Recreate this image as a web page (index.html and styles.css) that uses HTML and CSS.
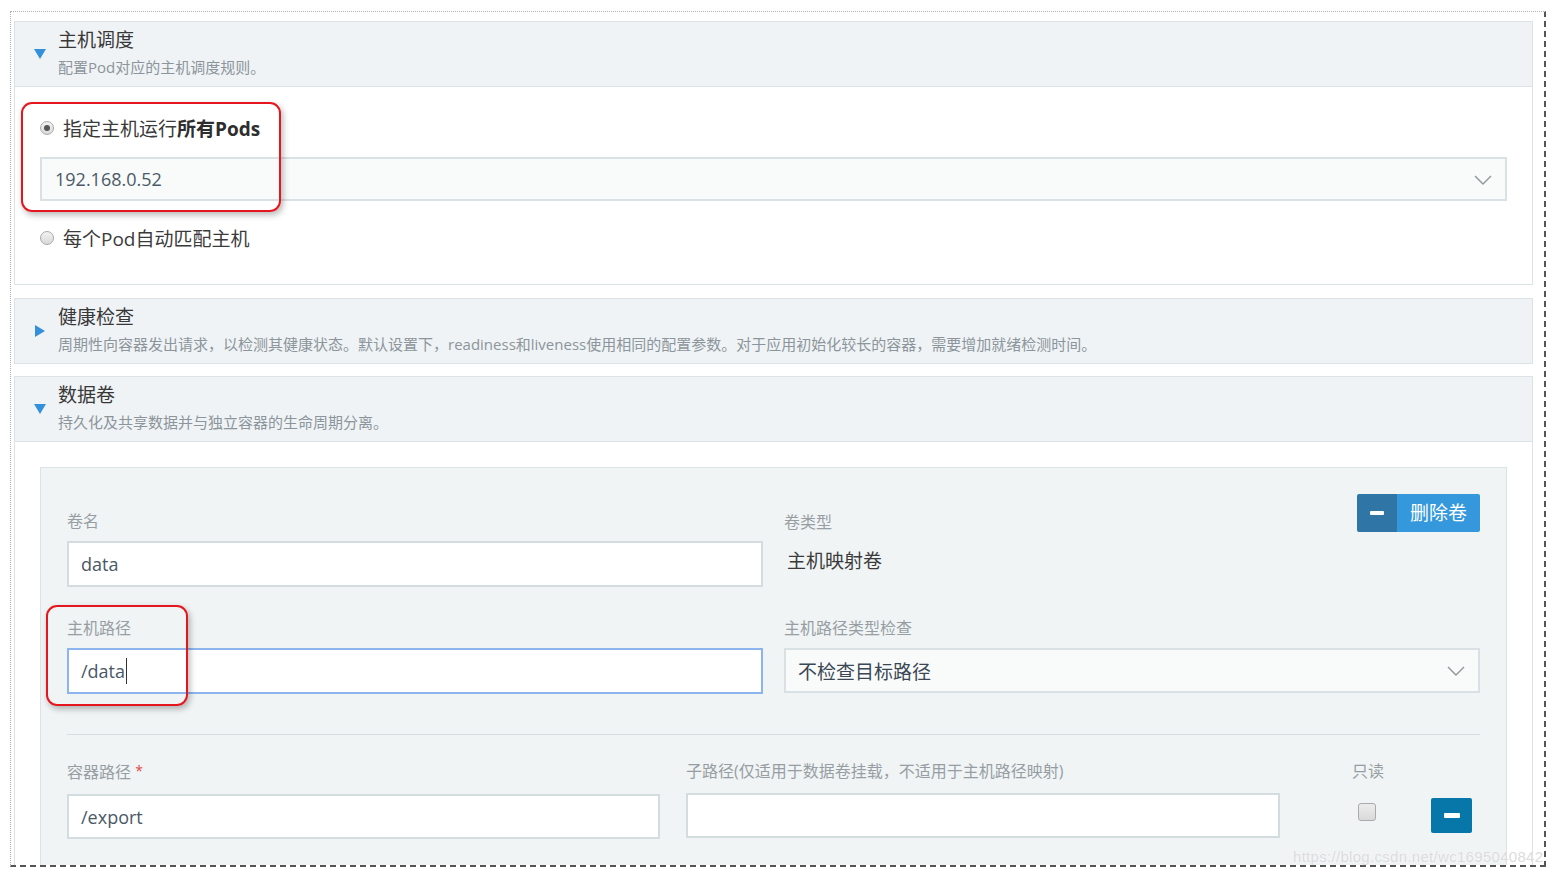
FILE: index.html
```html
<!DOCTYPE html>
<html lang="zh-CN">
<head>
<meta charset="utf-8">
<title>主机调度</title>
<link rel="stylesheet" href="styles.css">
</head>
<body>
<div class="frame">
  <section class="panel">
    <div class="panel-head">
      <span class="tri tri-down"></span>
      <div class="head-text">
        <div class="title">主机调度</div>
        <div class="sub">配置Pod对应的主机调度规则。</div>
      </div>
    </div>
    <div class="panel-body sched">
      <div class="radio-row"><span class="radio checked"></span><span>指定主机运行<b>所有Pods</b></span></div>
      <div class="select host-select">
        <span class="val">192.168.0.52</span>
        <svg class="chev" width="18" height="10" viewBox="0 0 18 10"><path d="M1 1 L9 9 L17 1" fill="none" stroke="#8d969b" stroke-width="1.4"/></svg>
      </div>
      <div class="radio-row second"><span class="radio"></span><span>每个Pod自动匹配主机</span></div>
    </div>
  </section>

  <section class="panel gap1">
    <div class="panel-head">
      <span class="tri tri-right"></span>
      <div class="head-text">
        <div class="title">健康检查</div>
        <div class="sub">周期性向容器发出请求，以检测其健康状态。默认设置下，readiness和liveness使用相同的配置参数。对于应用初始化较长的容器，需要增加就绪检测时间。</div>
      </div>
    </div>
  </section>

  <section class="panel gap2">
    <div class="panel-head">
      <span class="tri tri-down"></span>
      <div class="head-text">
        <div class="title">数据卷</div>
        <div class="sub">持久化及共享数据并与独立容器的生命周期分离。</div>
      </div>
    </div>
    <div class="panel-body vols">
      <div class="card">
        <div class="grid2">
          <div class="cell first">
            <div class="lbl">卷名</div>
            <div class="input">data</div>
          </div>
          <div class="cell">
            <div class="cell-head">
              <div class="lbl">卷类型</div>
              <div class="btn-del"><span class="btn-icon"><span class="bar"></span></span><span class="btn-text">删除卷</span></div>
            </div>
            <div class="static">主机映射卷</div>
          </div>
          <div class="cell">
            <div class="lbl">主机路径</div>
            <div class="input focus">/data<span class="caret"></span></div>
          </div>
          <div class="cell">
            <div class="lbl">主机路径类型检查</div>
            <div class="select">
              <span class="val dark">不检查目标路径</span>
              <svg class="chev" width="18" height="10" viewBox="0 0 18 10"><path d="M1 1 L9 9 L17 1" fill="none" stroke="#8d969b" stroke-width="1.4"/></svg>
            </div>
          </div>
        </div>
        <div class="sep"></div>
        <div class="grid3">
          <div class="cell">
            <div class="lbl">容器路径 <span class="req">*</span></div>
            <div class="input">/export</div>
          </div>
          <div class="cell">
            <div class="lbl">子路径(仅适用于数据卷挂载，不适用于主机路径映射)</div>
            <div class="input"></div>
          </div>
          <div class="cell ro">
            <div class="ro-col">
              <div class="lbl">只读</div>
              <span class="checkbox"></span>
            </div>
            <div class="btn-minus"><span class="bar"></span></div>
          </div>
        </div>
      </div>
    </div>
  </section>
</div>
<div class="watermark">https://blog.csdn.net/wc1695040842</div>
<div class="mark mark1"></div>
<div class="mark mark2"></div>
</body>
</html>
```
FILE: styles.css
```css
html, body {
  margin: 0;
  padding: 0;
  background: #fff;
}
body {
  position: relative;
  font-family: "Open Sans", "Noto Sans CJK SC", sans-serif;
  color: #3b3b3b;
}
.frame {
  position: relative;
  box-sizing: border-box;
  margin: 11px 0 0 10px;
  width: 1536px;
  height: 856px;
  border-left: 1px dotted #b0b0b0;
  border-top: 1px dotted #b0b0b0;
  border-right: 2px dashed #555;
  border-bottom: 2px dashed #555;
  padding: 9px 11px 0 3px;
  overflow: hidden;
}
.panel-head {
  display: flex;
  align-items: center;
  background: #eff3f5;
  border: 1px solid #dce3e6;
  padding: 6px 0 9px 19px;
}
.tri {
  width: 0;
  height: 0;
  flex: none;
}
.tri-down {
  border-left: 6px solid transparent;
  border-right: 6px solid transparent;
  border-top: 10px solid #3590db;
  margin-right: 12px;
  margin-top: 2px;
}
.tri-right {
  border-top: 6px solid transparent;
  border-bottom: 6px solid transparent;
  border-left: 10px solid #3590db;
  margin-left: 1px;
  margin-right: 13px;
  margin-top: 3px;
}
.title {
  font-size: 19px;
  line-height: 24px;
  color: #383838;
}
.sub {
  font-size: 15px;
  line-height: 20px;
  margin-top: 5px;
  color: #8c959b;
  white-space: nowrap;
}
.panel-body {
  border: 1px solid #dce3e6;
  border-top: 0;
  background: #fff;
}
.gap1 { margin-top: 13px; }
.gap2 { margin-top: 12px; }

.sched {
  padding: 28px 25px 33px 25px;
}
.radio-row {
  display: flex;
  align-items: center;
  height: 26px;
  font-size: 19px;
  color: #3b3b3b;
}
.radio-row b { font-weight: 700; color: #2e2e2e; }
.radio-row.second { margin-top: 24px; }
.radio {
  box-sizing: border-box;
  width: 14px;
  height: 14px;
  border-radius: 50%;
  border: 1px solid #a9a9a9;
  background: linear-gradient(#f2f2f2, #d9d9d9);
  margin-right: 9px;
  position: relative;
  flex: none;
}
.radio.checked::after {
  content: "";
  position: absolute;
  left: 3px;
  top: 3px;
  width: 6px;
  height: 6px;
  border-radius: 50%;
  background: #555;
}
.select {
  box-sizing: border-box;
  height: 45px;
  border: 2px solid #dae1e4;
  background: #f9fbfb;
  display: flex;
  align-items: center;
  justify-content: space-between;
  padding: 0 13px 0 12px;
}
.host-select {
  margin-top: 16px;
  height: 44px;
  padding-left: 13px;
}
.val {
  font-size: 18px;
  color: #4c5a67;
}
.val.dark { color: #3b4754; font-size: 19px; }
.chev { flex: none; margin-top: 1px; }

.vols {
  padding: 25px 25px 0 25px;
  height: 600px;
}
.card {
  background: #f0f4f5;
  border: 1px solid #dce3e6;
  padding: 26px 26px 40px 26px;
}
.grid2 {
  display: grid;
  grid-template-columns: 1fr 1fr;
  column-gap: 21px;
  row-gap: 31px;
}
.cell.first { padding-top: 17px; }
.lbl {
  font-size: 16px;
  line-height: 20px;
  color: #979ea3;
  white-space: nowrap;
}
.lbl + .input, .lbl + .select { margin-top: 10px; }
.input {
  box-sizing: border-box;
  height: 46px;
  border: 2px solid #d3dcdf;
  background: #fff;
  padding: 0 12px;
  font-size: 18px;
  line-height: 42px;
  color: #4a5866;
  display: flex;
  align-items: center;
}
.input.focus { border-color: #8cb5ef; }
.caret {
  display: inline-block;
  width: 1px;
  height: 26px;
  background: #333;
  margin-left: 1px;
}
.cell-head {
  display: flex;
  justify-content: space-between;
  align-items: flex-end;
  height: 38px;
}
.btn-del {
  display: flex;
  height: 38px;
  border-radius: 2px;
  overflow: hidden;
}
.btn-icon {
  width: 40px;
  background: #2f75a5;
  display: flex;
  align-items: center;
  justify-content: center;
}
.bar {
  display: block;
  width: 14px;
  height: 4px;
  background: #fff;
  border-radius: 1px;
}
.btn-text {
  background: #3598dc;
  color: #fff;
  font-size: 19px;
  line-height: 38px;
  padding: 0 13px;
}
.static {
  margin-top: 17px;
  font-size: 19px;
  line-height: 24px;
  color: #3b3b3b;
  padding-left: 3px;
}
.sep {
  margin-top: 40px;
  height: 1px;
  background: #d6dde0;
}
.grid3 {
  display: grid;
  grid-template-columns: 593px 594px 1fr;
  column-gap: 26px;
  margin-top: 26px;
}
.grid3 .lbl + .input { margin-top: 12px; height: 45px; }
.req {
  color: #e04848;
  font-size: 14px;
  vertical-align: 2px;
}
.ro {
  display: flex;
  justify-content: space-between;
  padding-left: 46px;
  padding-right: 8px;
}
.ro-col {
  display: flex;
  flex-direction: column;
}
.checkbox {
  box-sizing: border-box;
  display: block;
  width: 18px;
  height: 18px;
  margin: 22px 0 0 6px;
  border: 1px solid #aaa;
  border-radius: 3px;
  background: linear-gradient(#ececec, #dadada);
}
.btn-minus {
  width: 41px;
  height: 35px;
  margin-top: 37px;
  background: #0777a9;
  border-radius: 2px;
  display: flex;
  align-items: center;
  justify-content: center;
}
.btn-minus .bar {
  width: 16px;
  height: 5px;
}
.watermark {
  position: absolute;
  left: 1293px;
  top: 848px;
  font-family: "Liberation Sans", Arial, sans-serif;
  font-size: 15px;
  letter-spacing: 0.3px;
  line-height: 18px;
  color: rgba(215, 215, 215, 0.9);
  text-shadow: 0 0 1px #fff;
  white-space: nowrap;
}
.mark {
  position: absolute;
  box-sizing: border-box;
  border: 2px solid #e5161e;
  border-radius: 11px;
  box-shadow: 2px 3px 6px rgba(0, 0, 0, 0.28);
}
.mark1 {
  left: 21px;
  top: 102px;
  width: 260px;
  height: 110px;
}
.mark2 {
  left: 46px;
  top: 605px;
  width: 142px;
  height: 101px;
}
```
